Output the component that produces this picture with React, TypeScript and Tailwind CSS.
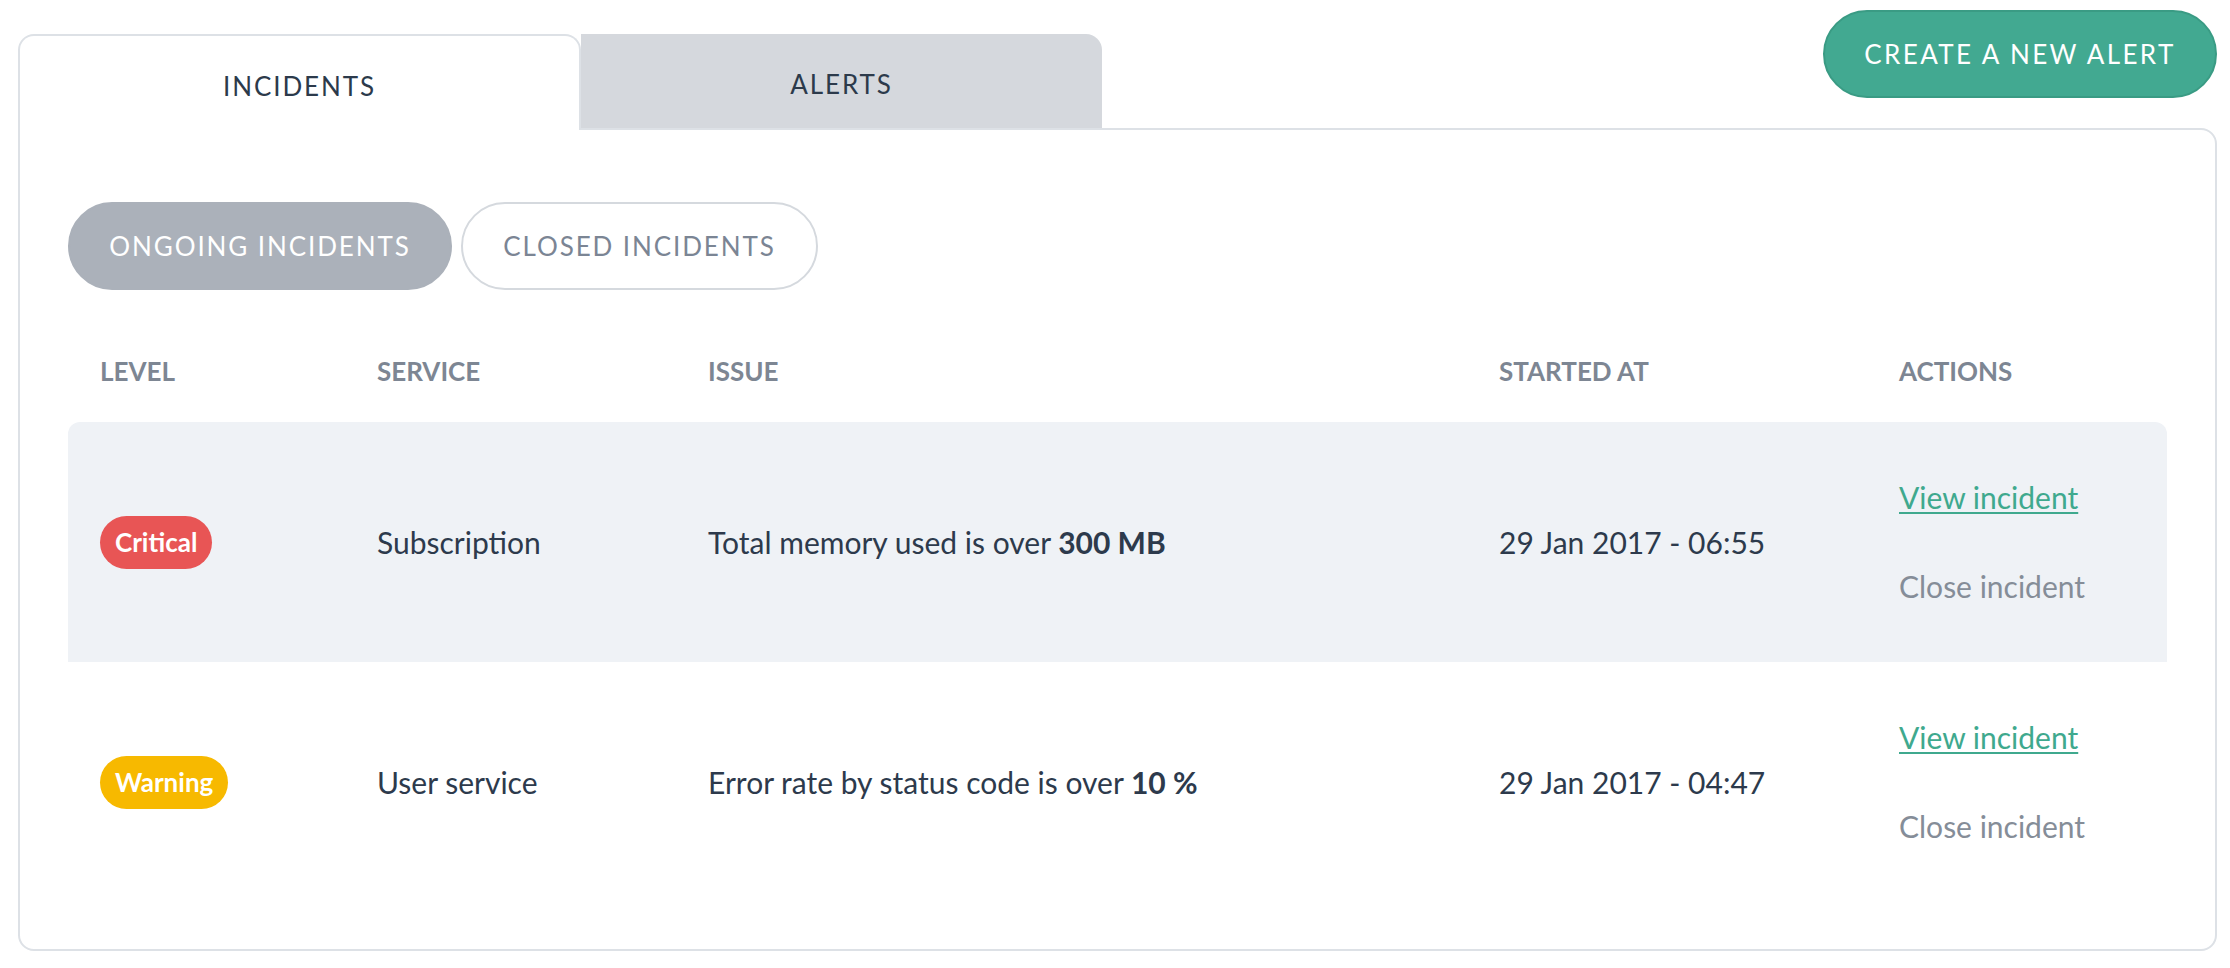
import React, { useState } from "react";

type Level = "critical" | "warning";

interface Incident {
  level: Level;
  service: string;
  issue: string;
  value: string;
  startedAt: string;
}

const incidents: Incident[] = [
  {
    level: "critical",
    service: "Subscription",
    issue: "Total memory used is over",
    value: "300 MB",
    startedAt: "29 Jan 2017 - 06:55",
  },
  {
    level: "warning",
    service: "User service",
    issue: "Error rate by status code is over",
    value: "10 %",
    startedAt: "29 Jan 2017 - 04:47",
  },
];

const levelStyles: Record<Level, { label: string; className: string }> = {
  critical: { label: "Critical", className: "bg-[#e85555]" },
  warning: { label: "Warning", className: "bg-[#f7b900]" },
};

const cols = "grid grid-cols-[277px_331px_791px_400px_1fr] pl-[32px]";

function LevelBadge({ level }: { level: Level }) {
  const style = levelStyles[level];
  return (
    <span
      className={`inline-flex h-[53px] items-center rounded-full px-[15px] text-[26px] font-bold text-white ${style.className}`}
    >
      {style.label}
    </span>
  );
}

export default function App() {
  const [tab, setTab] = useState<"incidents" | "alerts">("incidents");
  const [filter, setFilter] = useState<"ongoing" | "closed">("ongoing");

  return (
    <div className="min-h-screen bg-white pl-[18px] pr-[13px] pt-[10px] font-['Lato',sans-serif] text-[#2d3a4c]">
      {/* Top bar: tabs + create button */}
      <div className="flex items-end justify-between">
        <div className="flex h-[94px] items-start">
          <button
            onClick={() => setTab("incidents")}
            className="relative z-10 flex h-[96px] w-[563px] items-center justify-center rounded-t-2xl border-2 border-b-0 border-[#dde1e6] bg-white pt-[6px] text-[26px] tracking-[1.9px] text-[#2c3a4b]"
          >
            INCIDENTS
          </button>
          <button
            onClick={() => setTab("alerts")}
            className="flex h-[94px] w-[521px] items-center justify-center rounded-tr-2xl bg-[#d5d8dd] pt-[6px] text-[26px] tracking-[1.9px] text-[#2c3a4b]"
          >
            ALERTS
          </button>
        </div>
        <button className="mb-[30px] h-[88px] w-[394px] rounded-full border-2 border-[#3a9b84] bg-[#42a991] text-[26px] tracking-[2.4px] text-white">
          CREATE A NEW ALERT
        </button>
      </div>

      {/* Panel */}
      <div className="rounded-b-2xl rounded-tr-2xl border-2 border-[#dde1e6] px-[48px] pb-[47px] pt-[72px]">
        <div className="flex gap-[9px]">
          <button
            onClick={() => setFilter("ongoing")}
            className={`h-[88px] w-[384px] rounded-full border-2 text-[26px] tracking-[1.9px] ${
              filter === "ongoing"
                ? "border-[#abb1ba] bg-[#abb1ba] text-white"
                : "border-[#d5d9de] bg-white text-[#7b8594]"
            }`}
          >
            ONGOING INCIDENTS
          </button>
          <button
            onClick={() => setFilter("closed")}
            className={`h-[88px] w-[357px] rounded-full border-2 text-[26px] tracking-[1.9px] ${
              filter === "closed"
                ? "border-[#abb1ba] bg-[#abb1ba] text-white"
                : "border-[#d5d9de] bg-white text-[#7b8594]"
            }`}
          >
            CLOSED INCIDENTS
          </button>
        </div>

        {/* Table header */}
        <div className={`${cols} h-[132px] pt-[66px] text-[26px] font-bold leading-[1.2] text-[#7d8693]`}>
          <div>LEVEL</div>
          <div>SERVICE</div>
          <div>ISSUE</div>
          <div>STARTED AT</div>
          <div>ACTIONS</div>
        </div>

        {/* Rows */}
        {incidents.map((item, i) => (
          <div
            key={i}
            className={`${cols} h-[240px] items-center text-[30px] ${
              i % 2 === 0 ? "rounded-t-xl bg-[#eff2f6]" : "bg-white"
            }`}
          >
            <div>
              <LevelBadge level={item.level} />
            </div>
            <div>{item.service}</div>
            <div>
              {item.issue} <span className="font-bold">{item.value}</span>
            </div>
            <div>{item.startedAt}</div>
            <div className="flex flex-col items-start gap-[44px]">
              <a href="#" className="text-[#3fa98e] underline decoration-2 underline-offset-[3px]">
                View incident
              </a>
              <a href="#" className="text-[#858d98]">
                Close incident
              </a>
            </div>
          </div>
        ))}
      </div>
    </div>
  );
}
